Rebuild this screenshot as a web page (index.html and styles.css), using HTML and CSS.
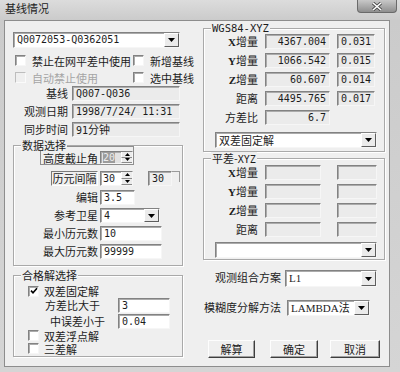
FILE: index.html
```html
<!DOCTYPE html>
<html lang="zh">
<head>
    <meta charset="UTF-8">
    <title>基线情况</title>
    <link rel="stylesheet" href="styles.css">
</head>
<body>
<div class="window">
    <div class="titlebar">
        <span class="title">基线情况</span>
        <span class="close">
            <svg width="12" height="9" viewBox="0 0 12 9"><path d="M2 1l8 7M10 1l-8 7" stroke="#4a4a4a" stroke-width="3.2"/><path d="M2 1l8 7M10 1l-8 7" stroke="#fff" stroke-width="1.6"/></svg>
        </span>
    </div>
    <div class="client">
        <!-- left column -->
        <div class="col-left">
            <div class="combo sunken main-combo">
                <span class="val mono">Q0072053-Q0362051</span>
                <span class="drop"><svg width="7" height="4" viewBox="0 0 7 4"><path d="M0 0h7L3.5 4z"/></svg></span>
            </div>
            <div class="checks">
                <div class="check"><span class="cb sunken"></span>禁止在网平差中使用</div>
                <div class="check"><span class="cb sunken"></span>新增基线</div>
                <div class="check off"><span class="cb"></span>自动禁止使用</div>
                <div class="check"><span class="cb sunken"></span>选中基线</div>
            </div>
            <div class="info"><span class="lbl">基线</span><span class="field sunken ro mono">Q007-Q036</span></div>
            <div class="info"><span class="lbl">观测日期</span><span class="field sunken ro mono">1998/7/24/ 11:31</span></div>
            <div class="info"><span class="lbl">同步时间</span><span class="field sunken ro mono">91<span class="cjk">分钟</span></span></div>

            <div class="group g-data">
                <div class="legend">数据选择</div>
                <div class="tilt">
                    <span class="lbl">高度截止角</span>
                    <div class="spin sunken gray">
                        <span class="field-t mono"><span class="sel">20</span></span>
                        <span class="arrows"><span><svg width="5" height="3" viewBox="0 0 5 3"><path d="M0 3h5L2.5 0z"/></svg></span><span><svg width="5" height="3" viewBox="0 0 5 3"><path d="M0 0h5L2.5 3z"/></svg></span></span>
                    </div>
                </div>
                <div class="era">
                    <span class="era-lbl">历元间隔</span>
                    <div class="spin sunken">
                        <span class="field-t mono">30</span>
                        <span class="arrows"><span><svg width="5" height="3" viewBox="0 0 5 3"><path d="M0 3h5L2.5 0z"/></svg></span><span><svg width="5" height="3" viewBox="0 0 5 3"><path d="M0 0h5L2.5 3z"/></svg></span></span>
                    </div>
                    <span class="field sunken ro mono era-val">30</span>
                    <span class="bracket"></span>
                </div>
                <div class="erow first"><span class="lbl">编辑</span><span class="field sunken mono w35">3.5</span></div>
                <div class="erow"><span class="lbl">参考卫星</span>
                    <div class="combo sunken w60"><span class="val mono">4</span><span class="drop"><svg width="7" height="4" viewBox="0 0 7 4"><path d="M0 0h7L3.5 4z"/></svg></span></div>
                </div>
                <div class="erow"><span class="lbl">最小历元数</span><span class="field sunken mono w62">10</span></div>
                <div class="erow"><span class="lbl">最大历元数</span><span class="field sunken mono w62">99999</span></div>
            </div>

            <div class="group g-check">
                <div class="legend">合格解选择</div>
                <div class="check sub first">
                    <span class="cb sunken"><svg width="8" height="8" viewBox="0 0 8 8"><path d="M1 3.6l2 2.2L7 1.2" fill="none" stroke="#000" stroke-width="1.6"/></svg></span>双差固定解
                </div>
                <div class="crow"><span class="lbl p31">方差比大于</span><span class="field sunken mono">3</span></div>
                <div class="crow second"><span class="lbl p36">中误差小于</span><span class="field sunken mono">0.04</span></div>
                <div class="check sub small"><span class="cb sunken"></span>双差浮点解</div>
                <div class="check sub small"><span class="cb sunken"></span>三差解</div>
            </div>
        </div>

        <!-- right column -->
        <div class="col-right">
            <div class="group g-wgs">
                <div class="legend mono">WGS84-XYZ</div>
                <div class="drow first"><span class="lbl"><span class="axis">X</span>增量</span><span class="field sunken ro mono num b1">4367.004</span><span class="field sunken ro mono num b2">0.031</span></div>
                <div class="drow"><span class="lbl"><span class="axis">Y</span>增量</span><span class="field sunken ro mono num b1">1066.542</span><span class="field sunken ro mono num b2">0.015</span></div>
                <div class="drow"><span class="lbl"><span class="axis">Z</span>增量</span><span class="field sunken ro mono num b1">60.607</span><span class="field sunken ro mono num b2">0.014</span></div>
                <div class="drow"><span class="lbl">距离</span><span class="field sunken ro mono num b1">4495.765</span><span class="field sunken ro mono num b2">0.017</span></div>
                <div class="drow"><span class="lbl">方差比</span><span class="field sunken ro mono num b1">6.7</span></div>
                <div class="combo sunken wide"><span class="val">双差固定解</span><span class="drop"><svg width="7" height="4" viewBox="0 0 7 4"><path d="M0 0h7L3.5 4z"/></svg></span></div>
            </div>

            <div class="group g-adj">
                <div class="legend"><span>平差-</span><span class="mono">XYZ</span></div>
                <div class="drow first"><span class="lbl"><span class="axis">X</span>增量</span><span class="field sunken ro b1"></span><span class="field sunken ro b2"></span></div>
                <div class="drow"><span class="lbl"><span class="axis">Y</span>增量</span><span class="field sunken ro b1"></span><span class="field sunken ro b2"></span></div>
                <div class="drow"><span class="lbl"><span class="axis">Z</span>增量</span><span class="field sunken ro b1"></span><span class="field sunken ro b2"></span></div>
                <div class="drow"><span class="lbl">距离</span><span class="field sunken ro b1"></span><span class="field sunken ro b2"></span></div>
                <div class="combo sunken wide"><span class="val"></span><span class="drop"><svg width="7" height="4" viewBox="0 0 7 4"><path d="M0 0h7L3.5 4z"/></svg></span></div>
            </div>

            <div class="opt opt-1">
                <span class="lbl">观测组合方案</span>
                <div class="combo sunken"><span class="val serif">L1</span><span class="drop"><svg width="7" height="4" viewBox="0 0 7 4"><path d="M0 0h7L3.5 4z"/></svg></span></div>
            </div>
            <div class="opt opt-2">
                <span class="lbl">模糊度分解方法</span>
                <div class="combo sunken"><span class="val serif">LAMBDA法</span><span class="drop"><svg width="7" height="4" viewBox="0 0 7 4"><path d="M0 0h7L3.5 4z"/></svg></span></div>
            </div>

            <div class="buttons">
                <button class="btn b-solve">解算</button>
                <button class="btn b-ok">确定</button>
                <button class="btn b-cancel">取消</button>
            </div>
        </div>
    </div>
</div>
</body>
</html>
```

FILE: styles.css
```css
*{
    margin: 0;
    padding: 0;
    box-sizing: border-box;
}
body{
    width: 400px;
    height: 372px;
    overflow: hidden;
    background: #d2d2d2;
    font: 11px "Noto Sans CJK SC", sans-serif;
    color: #1c1c1c;
}
.mono{
    font-family: "DejaVu Sans Mono", monospace;
    font-size: 10px;
}
.cjk{
    font-family: "Noto Sans CJK SC", sans-serif;
    font-size: 11px;
}
.serif{
    font-family: "Liberation Serif", "Noto Sans CJK SC", serif;
    font-size: 11px;
}
.axis{
    font-family: "Liberation Serif", serif;
    font-weight: bold;
    font-size: 11px;
}

/* window frame */
.window{
    height: 372px;
    background: linear-gradient(#dcdcdc, #cbcbcb 20px, #d5d5d5);
}
.titlebar{
    height: 20px;
    display: flex;
    justify-content: space-between;
    padding: 0 3px 0 5px;
}
.title{
    line-height: 17px;
    color: #222;
}
.close{
    width: 40px;
    height: 13px;
    border: 1px solid #6a6a6a;
    border-top: 0;
    border-radius: 0 0 4px 4px;
    background: linear-gradient(#c8c8c8, #8f8f8f);
    display: flex;
    align-items: center;
    justify-content: center;
}
.client{
    margin-left: 4px;
    width: 386px;
    height: 347px;
    border: 1px solid #8d8d8d;
    background: #efefef;
    display: flex;
}
.col-left{
    width: 170px;
    margin-left: 8px;
}
.col-right{
    width: 182px;
    margin-left: 20px;
}

/* controls */
.sunken{
    border: 1px solid;
    border-color: #828282 #f6f6f6 #f6f6f6 #828282;
    box-shadow: inset 1px 1px 0 #ababab;
}
.field{
    display: block;
    height: 15px;
    background: #fff;
    line-height: 13px;
    padding: 0 3px;
    white-space: nowrap;
    overflow: hidden;
}
.ro{
    background: #ebebeb;
}
.num{
    text-align: right;
}
.combo{
    display: flex;
    height: 16px;
    background: #fff;
}
.combo .val{
    flex: 1;
    padding-left: 3px;
    line-height: 14px;
    white-space: nowrap;
    overflow: hidden;
}
.drop{
    width: 15px;
    border: 1px solid;
    border-color: #fff #5e5e5e #5e5e5e #fff;
    background: #ebebeb;
    display: flex;
    align-items: center;
    justify-content: center;
}
.main-combo{
    width: 167px;
    margin-top: 11px;
}

/* checkboxes */
.checks{
    display: grid;
    grid-template-columns: 118px 1fr;
    grid-auto-rows: 17px;
    margin-top: 4px;
}
.check{
    display: flex;
    align-items: center;
    gap: 6px;
    padding-left: 2px;
    line-height: 14px;
    white-space: nowrap;
}
.cb{
    width: 11px;
    height: 11px;
    background: #fff;
    display: flex;
    align-items: center;
    justify-content: center;
}
.check.off{
    color: #a5a5a5;
}
.check.off .cb{
    border: 1px solid;
    border-color: #bdbdbd #fafafa #fafafa #bdbdbd;
    background: #efefef;
}

/* info rows */
.info{
    display: grid;
    grid-template-columns: 55px 108px;
    column-gap: 4px;
    height: 15px;
    margin-bottom: 3px;
}
.lbl{
    text-align: right;
    line-height: 15px;
    white-space: nowrap;
}

/* group boxes */
.group{
    border: 1px solid #a9a9a9;
    box-shadow: inset 1px 1px 0 #fff, 1px 1px 0 #fff;
}
.legend{
    position: relative;
    width: fit-content;
    height: 12px;
    margin: -7px 0 -5px 7px;
    padding: 0 1px;
    background: #efefef;
    line-height: 12px;
}
.legend.mono{
    font-size: 10.5px;
}
.g-data{
    margin-top: 8px;
    padding-bottom: 6px;
}
.tilt{
    margin: -1px 0 0 26px;
    width: 94px;
    height: 19px;
    border: 1px solid #8e8e8e;
    display: flex;
    align-items: flex-end;
}
.tilt .lbl{
    width: 57px;
    line-height: 12px;
    margin: 0 2px 0 0;
}
.spin{
    width: 33px;
    height: 13px;
    display: flex;
    background: #fff;
}
.spin.gray{
    background: #e2e2e2;
}
.field-t{
    flex: 1;
    line-height: 11px;
    padding-left: 2px;
}
.sel{
    background: #9c9c9c;
    color: #ededed;
}
.arrows{
    width: 11px;
    display: flex;
    flex-direction: column;
}
.arrows span{
    flex: 1;
    display: flex;
    align-items: center;
    justify-content: center;
    background: #ececec;
    border-left: 1px solid #fff;
    border-bottom: 1px solid #8a8a8a;
}
.era{
    display: flex;
    height: 15px;
    margin-top: 6px;
}
.era .spin{
    height: 15px;
    margin-left: 2px;
}
.era .field-t{
    line-height: 13px;
}
.era-lbl{
    margin-left: 37px;
    width: 47px;
    border: 1px solid;
    border-color: #7a7a7a #fdfdfd #fdfdfd #7a7a7a;
    text-align: center;
    line-height: 13px;
}
.era-val{
    margin-left: 15px;
    width: 24px;
    background: #efefef;
}
.bracket{
    width: 8px;
    height: 11px;
    border-top: 1px solid #9a9a9a;
    border-right: 1px solid #9a9a9a;
}
.erow{
    display: grid;
    grid-template-columns: 84px auto;
    justify-content: start;
    column-gap: 2px;
    height: 15px;
    margin-top: 3px;
}
.erow.first{
    margin-top: 4px;
}
.w35{ width: 35px; }
.w60{ width: 60px; height: 15px; }
.w62{ width: 62px; }

.g-check{
    margin-top: 9px;
    padding-bottom: 1px;
}
.check.sub{
    padding-left: 14px;
    gap: 5px;
    height: 14px;
    line-height: 13px;
}
.check.sub.first{
    margin-top: 8px;
}
.check.sub.small{
    height: 13px;
    line-height: 12px;
}
.crow{
    display: grid;
    grid-template-columns: 104px 52px;
    height: 15px;
}
.crow .lbl{
    text-align: left;
    line-height: 13px;
    padding-top: 1px;
}
.crow.second{
    margin-top: 1px;
}
.p31{ padding-left: 31px; }
.p36{ padding-left: 36px; }

/* right column */
.g-wgs{
    margin-top: 7px;
    padding-bottom: 3px;
}
.drow{
    display: flex;
    height: 15px;
    margin-top: 4px;
}
.drow.first{
    margin-top: 5px;
}
.drow .lbl{
    width: 54px;
}
.g-wgs .b1{ margin-left: 7px; width: 65px; }
.g-wgs .b2{ margin-left: 7px; width: 38px; }
.g-adj .b1{ margin-left: 7px; width: 56px; }
.g-adj .b2{ margin-left: 16px; width: 40px; }
.g-adj .drow.first{
    margin-top: 6px;
}
.combo.wide{
    width: 162px;
    margin: 7px 0 0 11px;
}
.g-adj{
    margin-top: 6px;
    padding-bottom: 1px;
}
.g-adj .combo.wide{
    margin-top: 5px;
}
.opt{
    display: flex;
}
.opt .lbl{
    width: 78px;
}
.opt-1{
    margin-top: 10px;
    height: 17px;
}
.opt-1 .combo{
    margin-left: 4px;
    width: 92px;
    height: 17px;
}
.opt-2{
    margin-top: 13px;
    height: 16px;
}
.opt-2 .combo{
    margin-left: 6px;
    width: 83px;
}
.buttons{
    display: flex;
    margin-top: 24px;
}
.btn{
    height: 18px;
    font: 11px "Noto Sans CJK SC", sans-serif;
    color: #1c1c1c;
    background: #efefef;
    border: 1px solid;
    border-color: #fdfdfd #3e3e3e #3e3e3e #fdfdfd;
    box-shadow: inset -1px -1px 0 #a0a0a0;
}
.b-solve{ margin-left: 5px; width: 47px; }
.b-ok{ margin-left: 15px; width: 48px; }
.b-cancel{ margin-left: 12px; width: 50px; }
```
